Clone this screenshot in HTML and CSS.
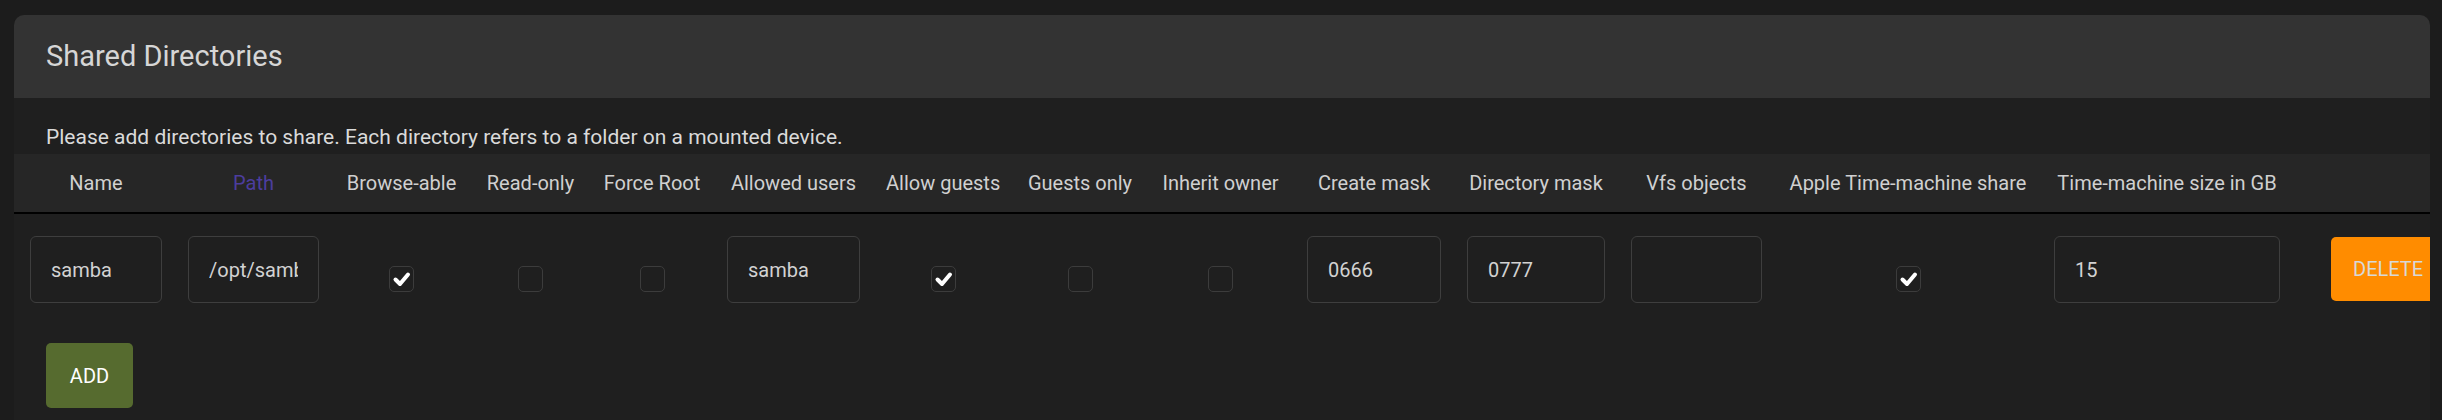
FILE: index.html
```html
<!DOCTYPE html>
<html lang="en">
<head>
<meta charset="utf-8">
<title>Shared Directories</title>
<link rel="stylesheet" href="styles.css">
</head>
<body>
<section class="card">
  <header class="card-header">
    <h2 class="card-title">Shared Directories</h2>
  </header>
  <p class="desc">Please add directories to share. Each directory refers to a folder on a mounted device.</p>
  <div class="table-wrap">
    <table class="shares">
      <colgroup>
        <col class="c-name"><col class="c-path"><col class="c-browse"><col class="c-ro"><col class="c-force">
        <col class="c-users"><col class="c-guests"><col class="c-gonly"><col class="c-inherit"><col class="c-cmask">
        <col class="c-dmask"><col class="c-vfs"><col class="c-apple"><col class="c-tmsize"><col class="c-del">
      </colgroup>
      <thead>
        <tr>
          <th>Name</th>
          <th class="sorted">Path</th>
          <th>Browse-able</th>
          <th>Read-only</th>
          <th>Force Root</th>
          <th>Allowed users</th>
          <th>Allow guests</th>
          <th>Guests only</th>
          <th>Inherit owner</th>
          <th>Create mask</th>
          <th>Directory mask</th>
          <th>Vfs objects</th>
          <th>Apple Time-machine share</th>
          <th>Time-machine size in GB</th>
          <th></th>
        </tr>
      </thead>
      <tbody>
        <tr>
          <td><input class="field" type="text" value="samba"></td>
          <td><input class="field" type="text" value="/opt/samba"></td>
          <td><span class="cb checked"><svg viewBox="0 0 25 25" width="25" height="25"><polyline points="6.5,13.5 11,18 19,8.5" /></svg></span></td>
          <td><span class="cb"></span></td>
          <td><span class="cb"></span></td>
          <td><input class="field" type="text" value="samba"></td>
          <td><span class="cb checked"><svg viewBox="0 0 25 25" width="25" height="25"><polyline points="6.5,13.5 11,18 19,8.5" /></svg></span></td>
          <td><span class="cb"></span></td>
          <td><span class="cb"></span></td>
          <td><input class="field" type="text" value="0666"></td>
          <td><input class="field" type="text" value="0777"></td>
          <td><input class="field" type="text" value=""></td>
          <td><span class="cb checked"><svg viewBox="0 0 25 25" width="25" height="25"><polyline points="6.5,13.5 11,18 19,8.5" /></svg></span></td>
          <td><input class="field" type="text" value="15"></td>
          <td class="del-cell"><button class="btn btn-delete" type="button">DELETE</button></td>
        </tr>
      </tbody>
    </table>
  </div>
  <div class="actions">
    <button class="btn btn-add" type="button">ADD</button>
  </div>
</section>
</body>
</html>
```

FILE: styles.css
```css
html, body {
  margin: 0;
  padding: 0;
  background: #1c1c1c;
  overflow: hidden;
}

body {
  font-family: Roboto, "Liberation Sans", Arial, sans-serif;
  color: #d6d6d6;
  padding: 15px 12px 0 14px;
}

.card {
  background: #1f1f1f;
  border-radius: 10px 10px 0 0;
  overflow: hidden;
  height: 405px;
}

.card-header {
  height: 83px;
  background: #333333;
  display: flex;
  align-items: center;
  padding: 0 32px;
}

.card-title {
  margin: 0;
  font-size: 29px;
  font-weight: 400;
  color: #d6d6d6;
  line-height: 34px;
  position: relative;
  top: -1px;
}

.desc {
  margin: 0;
  padding: 27px 32px 4px;
  font-size: 21px;
  line-height: 25px;
  color: #dadada;
}

.table-wrap {
  overflow: hidden;
}

.shares {
  border-collapse: collapse;
  table-layout: fixed;
  width: 2450px;
}

.c-name { width: 161px; }
.c-path { width: 157px; }
.c-browse { width: 139px; }
.c-ro { width: 119px; }
.c-force { width: 124px; }
.c-users { width: 159px; }
.c-guests { width: 140px; }
.c-gonly { width: 134px; }
.c-inherit { width: 147px; }
.c-cmask { width: 160px; }
.c-dmask { width: 164px; }
.c-vfs { width: 157px; }
.c-apple { width: 266px; }
.c-tmsize { width: 252px; }
.c-del { width: 171px; }

.shares thead tr {
  background: #262626;
  border-bottom: 2px solid #000;
}

.shares th {
  height: 58px;
  padding: 0 13px;
  font-size: 20px;
  font-weight: 400;
  color: #d0d0d0;
  text-align: center;
  vertical-align: middle;
  white-space: nowrap;
}

.shares th:first-child,
.shares td:first-child {
  padding-left: 16px;
}

.shares th.sorted {
  color: #4c3d9e;
}

.shares td {
  padding: 22px 13px 20px;
  text-align: center;
  vertical-align: top;
}

.shares td.del-cell {
  padding-left: 38px;
  padding-top: 23px;
  text-align: left;
}

.field {
  box-sizing: border-box;
  width: 100%;
  height: 67px;
  margin: 0;
  padding: 0 20px;
  background: transparent;
  border: 1px solid #3e3e3e;
  border-radius: 6px;
  font-family: Roboto, "Liberation Sans", Arial, sans-serif;
  font-size: 20px;
  color: #d2d2d2;
  outline: none;
}

.cb {
  display: inline-block;
  box-sizing: border-box;
  width: 25px;
  height: 26px;
  margin-top: 30px;
  border: 1px solid #3c3c3c;
  border-radius: 5px;
  vertical-align: top;
}

.cb svg {
  display: block;
  margin: -1px 0 0 -1px;
}

.cb polyline {
  fill: none;
  stroke: #ffffff;
  stroke-width: 4;
  stroke-linecap: round;
  stroke-linejoin: round;
}

.btn {
  border: none;
  border-radius: 5px;
  font-family: Roboto, "Liberation Sans", Arial, sans-serif;
  font-size: 20px;
  font-weight: 400;
  cursor: pointer;
}

.btn-delete {
  height: 64px;
  width: 120px;
  padding: 0 22px;
  background: #ff8c00;
  color: #d8d8d8;
  text-align: left;
}

.actions {
  padding: 20px 32px 0;
}

.btn-add {
  height: 65px;
  width: 87px;
  padding: 0;
  background: #566b2f;
  color: #ffffff;
}
```
